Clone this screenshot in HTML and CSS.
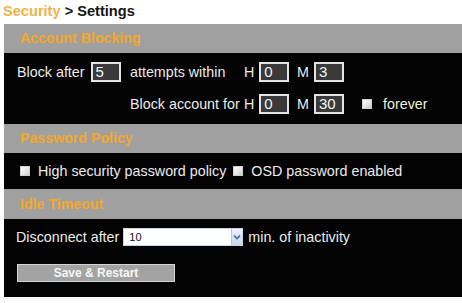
FILE: index.html
```html
<!DOCTYPE html>
<html>
<head>
<meta charset="utf-8">
<link rel="stylesheet" href="styles.css">
</head>
<body>
<div class="title"><span class="crumb">Security</span> &gt; Settings</div>
<div class="panel">
  <div class="hdr">Account Blocking</div>
  <div class="blocking">
    <div class="cell">Block after <span class="box">5</span></div>
    <div class="cell">attempts within</div>
    <div class="cell">H <span class="box">0</span></div>
    <div class="cell">M <span class="box">3</span></div>
    <div class="cell"></div>

    <div class="cell"></div>
    <div class="cell">Block account for</div>
    <div class="cell">H <span class="box">0</span></div>
    <div class="cell">M <span class="box">30</span></div>
    <div class="cell"><span class="chk"></span><span class="forever">forever</span></div>
  </div>
  <div class="hdr">Password Policy</div>
  <div class="policy">
    <span class="chk"></span><span>High security password policy</span>
    <span class="chk second"></span><span>OSD password enabled</span>
  </div>
  <div class="hdr idle-hdr">Idle Timeout</div>
  <div class="idle">
    <div class="row">
      <span>Disconnect after</span>
      <div class="select">
        <span class="val">10</span>
        <span class="arrow"><svg width="8" height="6" viewBox="0 0 8 6"><path d="M1 1.5 L4 4.5 L7 1.5" fill="none" stroke="#4a6a9a" stroke-width="1.6"/></svg></span>
      </div>
      <span>min. of inactivity</span>
    </div>
    <div class="btn">Save &amp; Restart</div>
  </div>
</div>
</body>
</html>
```

FILE: styles.css
```css
html, body {
  margin: 0;
  padding: 0;
  background: #ffffff;
  font-family: "Liberation Sans", Arial, sans-serif;
}
.title {
  height: 24px;
  line-height: 23px;
  padding-left: 3px;
  font-size: 14.6px;
  font-weight: bold;
  color: #151515;
}
.crumb {
  color: #f2b245;
}
.panel {
  margin-left: 4px;
  height: 273px;
  background: #030303;
  color: #ececec;
  font-size: 14.3px;
}
.hdr {
  height: 29px;
  line-height: 29px;
  padding-left: 16px;
  background: #a0a0a0;
  color: #f2a82c;
  font-size: 14.2px;
  font-weight: bold;
}
.idle-hdr {
  height: 30px;
  line-height: 30px;
}
.blocking {
  height: 71px;
  box-sizing: border-box;
  padding: 9px 0 10px 13px;
  display: grid;
  grid-template-columns: 113px 114px 53px 65px auto;
  grid-template-rows: 20px 20px;
  row-gap: 12px;
}
.cell {
  display: flex;
  align-items: center;
  white-space: nowrap;
}
.box {
  display: inline-block;
  box-sizing: border-box;
  width: 30px;
  height: 20px;
  border: 2px solid #e2e2e2;
  background: #3a3a3a;
  color: #f4f4f4;
  font-size: 15px;
  line-height: 16px;
  padding-left: 3px;
  margin-left: 5px;
}
.cell:first-child .box {
  margin-left: 6px;
}
.chk {
  display: inline-block;
  box-sizing: border-box;
  width: 10px;
  height: 10px;
  background: linear-gradient(135deg, #ffffff 0%, #e4e4e4 60%, #c8c8c8 100%);
  border: 1px solid #cfcfcf;
  margin-right: 8px;
}
.blocking .chk {
  margin-right: 11px;
}
.forever {
  color: #f0f0dc;
}
.policy {
  height: 36px;
  display: flex;
  align-items: center;
  padding-left: 16px;
  white-space: nowrap;
}
.policy .chk.second {
  margin-left: 7px;
}
.idle {
  height: 78px;
  box-sizing: border-box;
  padding: 9px 0 0 12px;
}
.idle .row {
  display: flex;
  align-items: center;
  height: 18px;
  white-space: nowrap;
}
.select {
  position: relative;
  box-sizing: border-box;
  width: 120px;
  height: 18px;
  margin: 0 5px 0 4px;
  background: #ffffff;
  border: 1px solid #c9d3df;
}
.select .val {
  display: block;
  padding-left: 5px;
  line-height: 16px;
  font-size: 11px;
  color: #111;
}
.select .arrow {
  position: absolute;
  right: 0;
  top: 0;
  width: 10px;
  height: 16px;
  display: flex;
  align-items: center;
  justify-content: center;
  background: linear-gradient(#eef3fb, #c7d6ee);
  border-left: 1px solid #b3c4e0;
}
.btn {
  margin: 18px 0 0 1px;
  box-sizing: border-box;
  width: 158px;
  height: 18px;
  background: #a3a3a3;
  border: 1px solid #d4d4d4;
  color: #f7f7f7;
  font-size: 12px;
  font-weight: bold;
  line-height: 16px;
  text-align: center;
}
```
